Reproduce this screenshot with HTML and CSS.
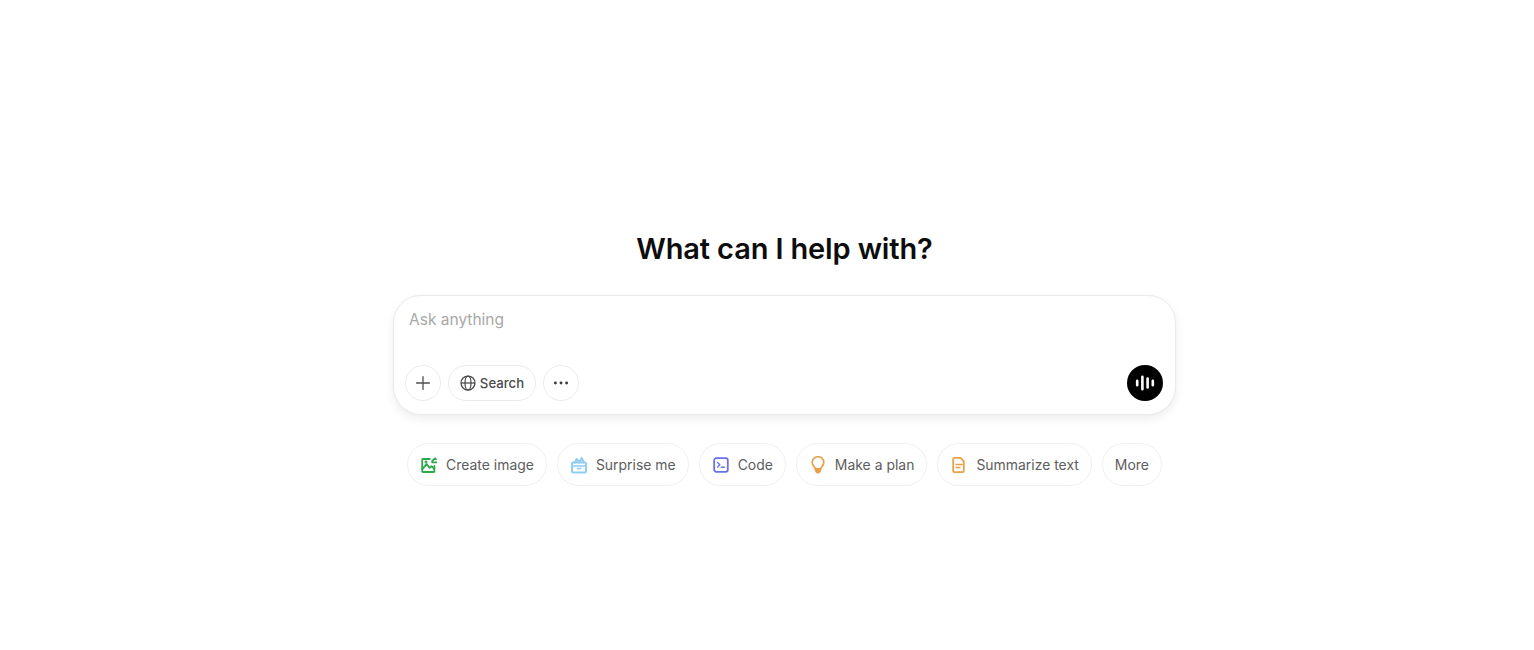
FILE: index.html
```html
<!DOCTYPE html>
<html lang="en">
<head>
<meta charset="utf-8">
<title>ChatGPT</title>
<link rel="stylesheet" href="styles.css">
</head>
<body>
<main class="page">
  <h1 class="title">What can I help with?</h1>
  <section class="composer">
    <div class="placeholder">Ask anything</div>
    <div class="toolbar">
      <div class="tools">
        <button class="tool round" aria-label="Add">
          <svg class="ico18" viewBox="0 0 18 18" fill="none" stroke="#4f4f4f" stroke-width="1.3" stroke-linecap="round"><path d="M9 2.600v12.800M2.600 9h12.800"/></svg>
        </button>
        <button class="tool pill">
          <svg class="ico16" viewBox="0 0 16 16" fill="none" stroke="#4a4a4a" stroke-width="1.25"><circle cx="8" cy="8" r="7"/><ellipse cx="8" cy="8" rx="3" ry="7"/><path d="M1 8h14"/></svg>
          <span>Search</span>
        </button>
        <button class="tool round" aria-label="More tools">
          <svg class="ico18" viewBox="0 0 18 18" fill="#3c3c3c"><circle cx="3.400" cy="9" r="1.450"/><circle cx="9" cy="9" r="1.450"/><circle cx="14.600" cy="9" r="1.450"/></svg>
        </button>
      </div>
      <button class="voice" aria-label="Voice">
        <svg class="ico20" viewBox="0 0 20 20" fill="none" stroke="#fff" stroke-width="2.600" stroke-linecap="round"><path d="M2.200 7.700v4.600M7.400 3.700v12.600M12.600 5.600v8.800M17.800 7.700v4.600"/></svg>
      </button>
    </div>
  </section>
  <nav class="chips">
    <button class="chip">
      <svg class="ico18" viewBox="0 0 18 18" fill="none" stroke="#2ca84a" stroke-width="1.800" stroke-linejoin="round" stroke-linecap="round"><path d="M9.800 3H3a.8.800 0 0 0-.8.800v11.400a.8.800 0 0 0 .8.800h10.600a.8.800 0 0 0 .8-.8V10"/><path d="M2.400 13.200l4.200-5 3.200 3.600 1.800-1.600 2.800 3"/><circle cx="6" cy="6" r=".6"/><path d="M12 5.200l3-2.800M12.200 6.400h4M15 2.400l1 1"/></svg>
      <span>Create image</span>
    </button>
    <button class="chip">
      <svg class="ico18" viewBox="0 0 18 18" fill="none" stroke="#8fcdf5" stroke-width="2" stroke-linejoin="round" stroke-linecap="round"><rect x="2" y="6.400" width="14" height="10" rx="1"/><path d="M2 10h14" stroke-width="1.500"/><path d="M7.400 12.600h3.200" stroke-width="1.500"/><path d="M4.800 6.400L6.800 3l2.400 3.400L11.800 2l2 4.400"/></svg>
      <span>Surprise me</span>
    </button>
    <button class="chip">
      <svg class="ico18" viewBox="0 0 18 18" fill="none" stroke="#6a70f2" stroke-width="1.800" stroke-linejoin="round" stroke-linecap="round"><rect x="2.200" y="2.200" width="13.600" height="13.600" rx="2"/><path d="M5.600 6.600L7.800 8.800 5.600 11M9.200 11.200h3.200" stroke-width="1.400"/></svg>
      <span>Code</span>
    </button>
    <button class="chip">
      <svg class="ico18" viewBox="0 0 18 18" fill="none" stroke="#e8a04a" stroke-width="1.700" stroke-linejoin="round" stroke-linecap="round"><path d="M6.300 12.800c0-1.500-3.100-2.900-3.100-6.300a5.800 5.800 0 0 1 11.600 0c0 3.400-3.100 4.800-3.100 6.300z"/><path d="M6.400 13c.2 2.400 1.100 3.700 2.600 3.700s2.400-1.300 2.600-3.700z" fill="#e8a04a"/></svg>
      <span>Make a plan</span>
    </button>
    <button class="chip">
      <svg class="ico18" viewBox="0 0 18 18" fill="none" stroke="#e8a04a" stroke-width="1.800" stroke-linejoin="round" stroke-linecap="round"><path d="M4.400 1.800h6l3.400 3.400v9.800a1.200 1.200 0 0 1-1.200 1.200H4.400a1.200 1.200 0 0 1-1.200-1.200V3a1.200 1.200 0 0 1 1.200-1.200z"/><path d="M6 8.400h6M6 11.400h4" stroke-width="1.500"/></svg>
      <span>Summarize text</span>
    </button>
    <button class="chip">
      <span>More</span>
    </button>
  </nav>
</main>
</body>
</html>
```

FILE: styles.css
```css
* {
  box-sizing: border-box;
}

html,
body {
  margin: 0;
  height: 100%;
  background: #fff;
  font-family: Inter, "Liberation Sans", sans-serif;
}

.page {
  display: flex;
  flex-direction: column;
  align-items: center;
  padding-top: 230px;
  padding-left: 35px;
  height: 650px;
  overflow: hidden;
}

.title {
  margin: 0;
  font-size: 29px;
  line-height: 37px;
  font-weight: 600;
  color: #0d0d0d;
  letter-spacing: -0.14px;
}

.composer {
  width: 783px;
  height: 120px;
  margin-top: 28px;
  padding: 13px 12px 13px 11px;
  display: flex;
  flex-direction: column;
  justify-content: space-between;
  background: #fff;
  border: 1px solid #ebebeb;
  border-radius: 28px;
  box-shadow: 0 4px 10px rgba(0, 0, 0, 0.07), 0 0 1px rgba(0, 0, 0, 0.05);
}

.placeholder {
  padding-left: 4px;
  font-size: 15.5px;
  line-height: 22px;
  color: #a8a8a8;
}

.toolbar,
.tools {
  display: flex;
  align-items: center;
}

.toolbar {
  justify-content: space-between;
}

.tools {
  gap: 7px;
}

button {
  font-family: inherit;
  background: #fff;
  padding: 0;
  cursor: pointer;
}

.tool {
  display: flex;
  align-items: center;
  justify-content: center;
  height: 36px;
  border: 1px solid #ebebeb;
  border-radius: 18px;
  color: #4a4a4a;
  font-size: 13.2px;
  font-weight: 500;
}

.round {
  width: 36px;
}

.pill {
  width: 88px;
  gap: 4px;
}

.voice {
  display: flex;
  align-items: center;
  justify-content: center;
  width: 36px;
  height: 36px;
  border: 0;
  border-radius: 50%;
  background: #000;
}

.chips {
  display: flex;
  gap: 10px;
  margin-top: 28px;
}

.chip {
  display: flex;
  align-items: center;
  gap: 8px;
  height: 43px;
  padding: 0 12px;
  border: 1px solid #efefef;
  border-radius: 22px;
  color: #5d5d5d;
  font-size: 13.95px;
  white-space: nowrap;
}

.ico16 {
  width: 16px;
  height: 16px;
}

.ico18 {
  width: 18px;
  height: 18px;
}

.ico20 {
  width: 20px;
  height: 20px;
}
```
